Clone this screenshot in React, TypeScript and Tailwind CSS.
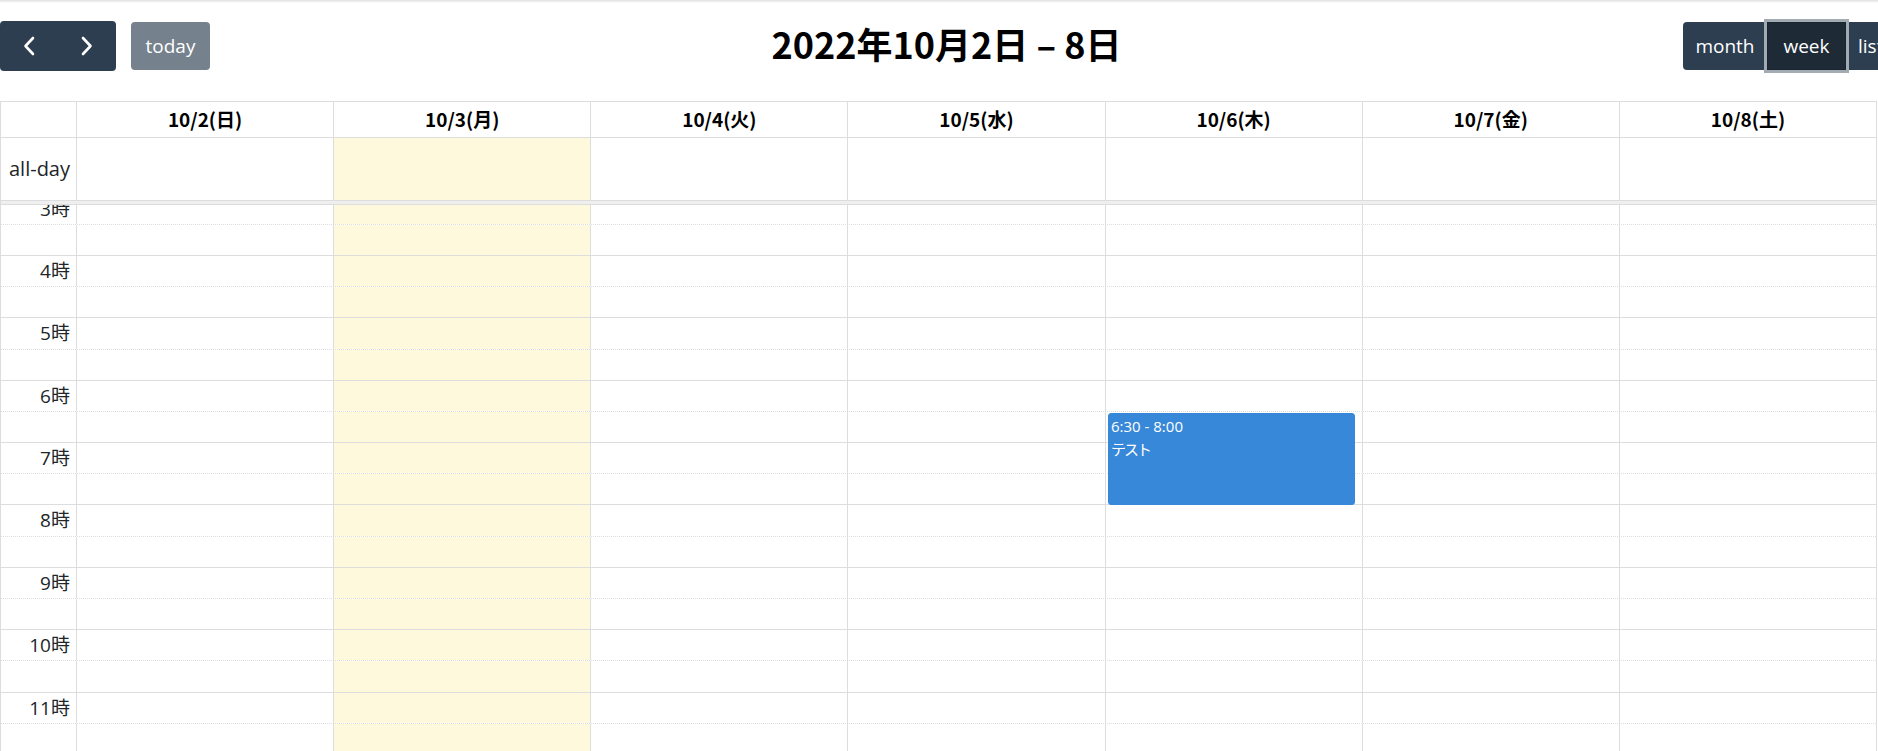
import React from "react"

const days = ["10/2(日)", "10/3(月)", "10/4(火)", "10/5(水)", "10/6(木)", "10/7(金)", "10/8(土)"]
const hours = [3, 4, 5, 6, 7, 8, 9, 10, 11, 12]
const TODAY = 1

function Chevron({ dir }: { dir: "left" | "right" }) {
  return (
    <svg width="14" height="20" viewBox="0 0 14 20" fill="none">
      <path
        d={dir === "left" ? "M11 2 L3.5 10 L11 18" : "M3 2 L10.5 10 L3 18"}
        stroke="white"
        strokeWidth="2.6"
        strokeLinecap="round"
        strokeLinejoin="round"
      />
    </svg>
  )
}

function Cells() {
  return (
    <>
      {days.map((d, i) => (
        <div
          key={d}
          className={`flex-1 border-l border-[#ddd] ${i === TODAY ? "bg-[#fef8dd]" : ""}`}
        />
      ))}
    </>
  )
}

export default function App() {
  return (
    <div className="w-[1878px] h-[751px] overflow-hidden bg-white text-[#212529] font-['Open_Sans','Noto_Sans_CJK_JP',sans-serif]">
      <div className="h-[3px] bg-linear-to-b from-[#e0e0e0] to-white" />

      {/* toolbar */}
      <div className="mt-[18px] flex h-[50px] w-[1908px] items-center justify-between">
        <div className="flex items-center gap-[15px]">
          <div className="flex h-[50px] rounded-[4px] bg-[#2c3e50]">
            <button className="flex w-[58px] items-center justify-center">
              <Chevron dir="left" />
            </button>
            <button className="flex w-[58px] items-center justify-center">
              <Chevron dir="right" />
            </button>
          </div>
          <button className="h-[48px] w-[79px] rounded-[4px] bg-[#2c3e50] text-[19px] text-white opacity-65">
            today
          </button>
        </div>

        <h2 className="mb-[7px] font-['Noto_Sans_CJK_JP',sans-serif] text-[36px] font-bold leading-none text-black">
          2022年10月2日 – 8日
        </h2>

        <div className="flex h-[48px] items-stretch rounded-[4px] bg-[#2c3e50] text-[19px] text-white">
          <button className="w-[84px] rounded-l-[4px]">month</button>
          <button className="w-[79px] border border-[#1a252f] bg-[#1e2b37] shadow-[0_0_0_3px_#a2aab2]">
            week
          </button>
          <button className="w-[62px] rounded-r-[4px] pl-[12px] text-left">list</button>
        </div>
      </div>

      {/* calendar grid */}
      <div className="mt-[30px] w-[1877px] border-l border-r border-t border-[#ddd]">
        <div className="flex h-[36px] border-b border-[#ddd]">
          <div className="w-[75px]" />
          {days.map((d) => (
            <div
              key={d}
              className="flex flex-1 items-center justify-center border-l border-[#ddd] font-['Noto_Sans_CJK_JP',sans-serif] text-[19px] font-bold text-black"
            >
              {d}
            </div>
          ))}
        </div>

        <div className="flex h-[63px] border-b border-[#ddd]">
          <div className="flex w-[75px] items-center justify-end pr-[6px] text-[20px]">all-day</div>
          <Cells />
        </div>

        <div className="h-[4px] border-b border-[#ddd] bg-[#efefef]" />

        <div className="relative h-[546px] overflow-hidden">
          <div className="relative -mt-[12.4px]">
            {hours.map((h) => (
              <div key={h}>
                <div className="flex h-[31.2px] border-t border-[#ddd]">
                  <div className="w-[75px] pr-[6px] pt-[1px] text-right text-[19px] leading-[28px]">
                    {h}時
                  </div>
                  <Cells />
                </div>
                <div className="flex h-[31.2px] border-t border-dotted border-[#ddd]">
                  <div className="w-[75px]" />
                  <Cells />
                </div>
              </div>
            ))}

            {/* event */}
            <div className="absolute left-[1107px] top-[220.4px] h-[92px] w-[247px] rounded-[3px] border border-[#3788d8] bg-[#3788d8] px-[2px] pt-[1px] text-white">
              <div className="text-[15px] leading-[22px]">6:30 - 8:00</div>
              <div className="font-['Noto_Sans_CJK_JP',sans-serif] text-[15px] leading-[24px] tracking-[-2px]">
                テスト
              </div>
            </div>
          </div>
        </div>
      </div>
    </div>
  )
}
